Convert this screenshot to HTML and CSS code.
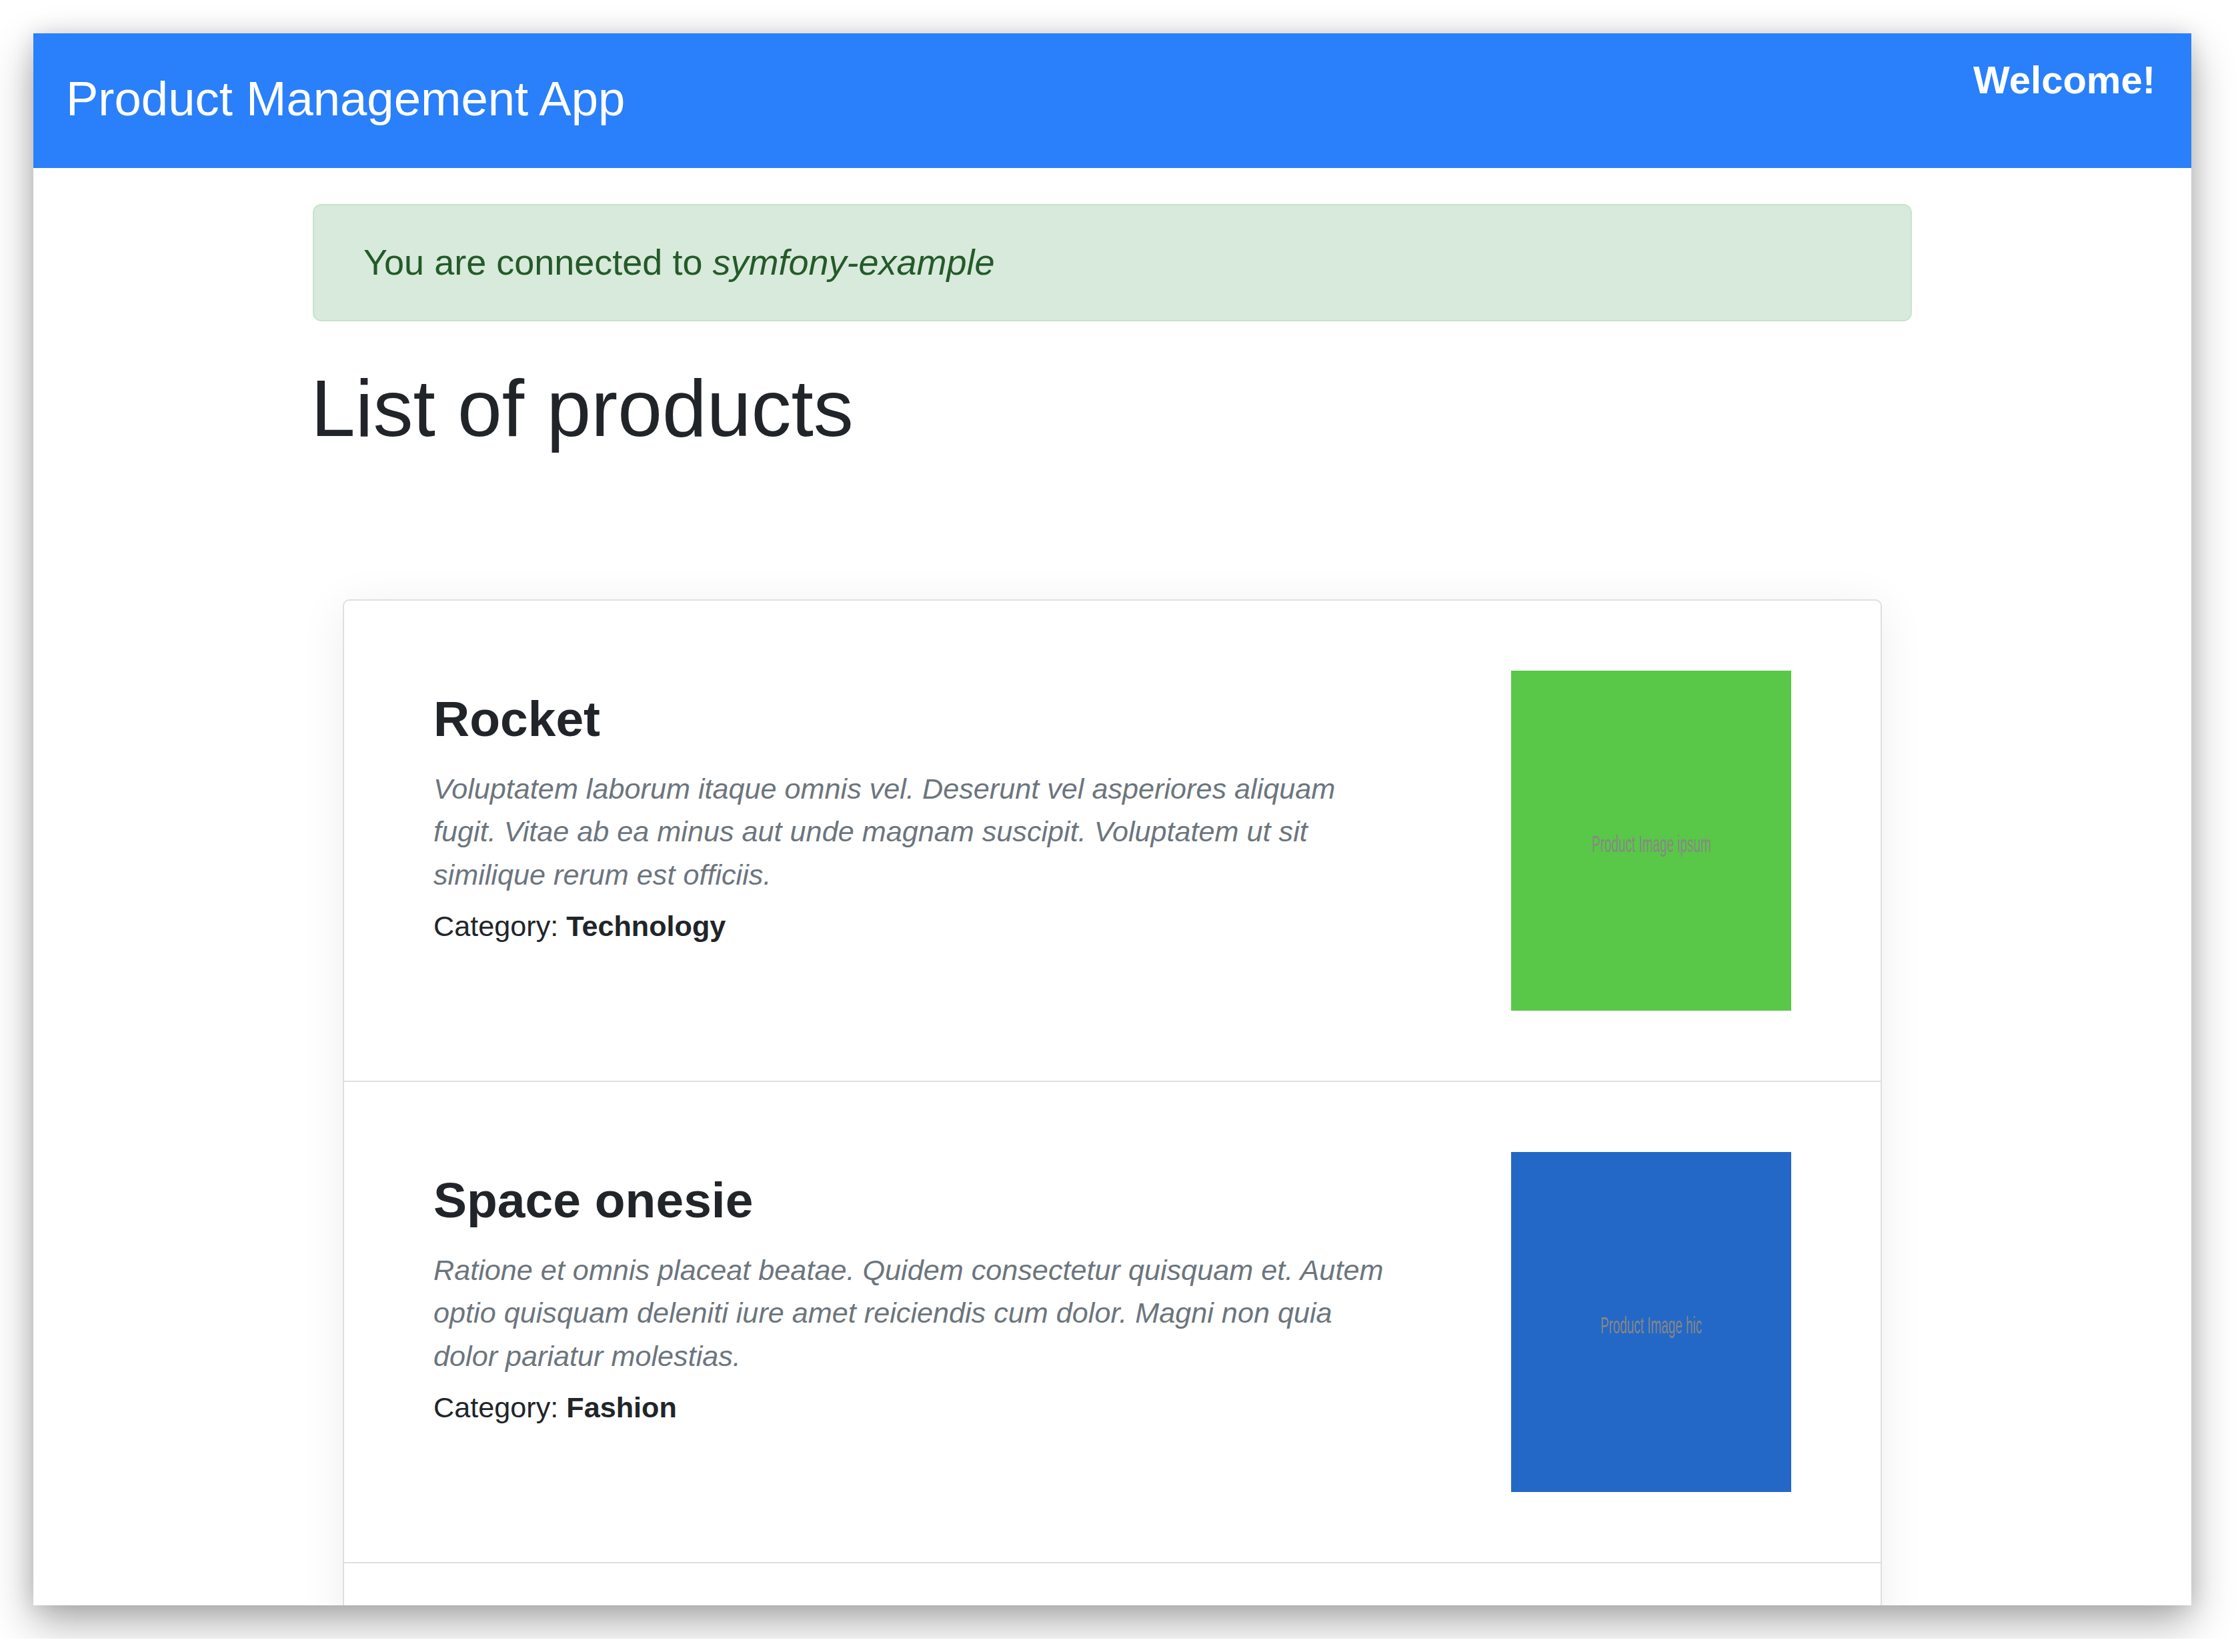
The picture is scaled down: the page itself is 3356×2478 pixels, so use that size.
FILE: index.html
```html
<!DOCTYPE html>
<html>
<head>
  <title>Product Management App</title>
  <link rel="stylesheet" href="styles.css">
</head>
<body>
  <div class="window">
    <header class="navbar">
      <span class="brand">Product Management App</span>
      <span class="welcome">Welcome!</span>
    </header>

    <main class="container">
      <div class="alert">You are connected to <em>symfony-example</em></div>

      <h1>List of products</h1>

      <div class="card">
        <div class="product">
          <div class="info">
            <h2>Rocket</h2>
            <p class="desc">Voluptatem laborum itaque omnis vel. Deserunt vel asperiores aliquam fugit. Vitae ab ea minus aut unde magnam suscipit. Voluptatem ut sit similique rerum est officiis.</p>
            <p class="category">Category: <strong>Technology</strong></p>
          </div>
          <div class="thumb green"><span>Product Image ipsum</span></div>
        </div>

        <div class="product">
          <div class="info">
            <h2>Space onesie</h2>
            <p class="desc">Ratione et omnis placeat beatae. Quidem consectetur quisquam et. Autem optio quisquam deleniti iure amet reiciendis cum dolor. Magni non quia dolor pariatur molestias.</p>
            <p class="category">Category: <strong>Fashion</strong></p>
          </div>
          <div class="thumb blue"><span>Product Image hic</span></div>
        </div>

        <div class="product empty"></div>
      </div>
    </main>
  </div>
</body>
</html>
```

FILE: styles.css
```css
body {
  margin: 0;
  padding: 50px;
  background: #fff;
  font-family: "Liberation Sans", Arial, Helvetica, sans-serif;
  color: #212529;
}

.window {
  width: 3236px;
  height: 2358px;
  overflow: hidden;
  background: #fff;
  box-shadow: 0 26px 60px rgba(0, 0, 0, 0.32), 0 0 30px rgba(0, 0, 0, 0.12);
}

/* top bar */
.navbar {
  display: flex;
  justify-content: space-between;
  align-items: flex-start;
  height: 202px;
  padding: 0 54px 0 49px;
  box-sizing: border-box;
  background: #2a7ffa;
  color: #fff;
}
.brand {
  font-size: 72.5px;
  line-height: 108px;
  margin-top: 44px;
}
.welcome {
  font-size: 58px;
  font-weight: bold;
  line-height: 87px;
  margin-top: 26px;
}

.container {
  width: 2398px;
  margin: 0 auto;
  padding-top: 54px;
}

.alert {
  padding: 46px 74px;
  border: 2px solid #c6e3cd;
  border-radius: 13px;
  background: #d8eadb;
  color: #245a29;
  font-size: 54px;
  line-height: 1.48;
}

h1 {
  margin: 60px 0 0 -3px;
  font-size: 120px;
  font-weight: normal;
  line-height: 1.18;
}

/* product list */
.card {
  margin: 215px 45px 0;
  border: 2px solid #dfdfdf;
  border-radius: 10px;
  background: #fff;
  box-shadow: 0 10px 70px rgba(0, 0, 0, 0.07);
}
.product {
  display: flex;
  align-items: flex-start;
  padding: 105px 134px;
  border-bottom: 2px solid #dfdfdf;
}
.product.empty {
  height: 510px;
  border-bottom: 0;
}
.info {
  width: 1440px;
  padding-top: 27px;
}
.info h2 {
  margin: 0;
  font-size: 75px;
  font-weight: bold;
  line-height: 1.2;
}
.desc {
  margin: 28px 0 12px;
  font-size: 43.2px;
  font-style: italic;
  line-height: 1.5;
  color: #6c757d;
}
.category {
  margin: 0;
  font-size: 43.2px;
  line-height: 1.5;
}

.thumb {
  margin-left: auto;
  width: 420px;
  height: 510px;
  display: flex;
  align-items: center;
  justify-content: center;
  color: #878787;
  font-size: 35px;
  white-space: nowrap;
}
.thumb span {
  transform: scaleX(0.54);
  margin-top: 10px;
}
.thumb.green { background: #59c747; }
.thumb.blue { background: #2368c6; }
```
